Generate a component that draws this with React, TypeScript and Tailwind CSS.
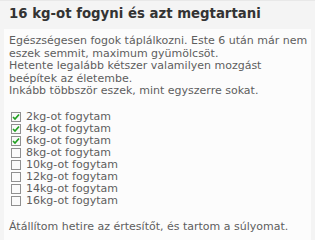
import React from "react";

const items = [
  { label: "2kg-ot fogytam", checked: true },
  { label: "4kg-ot fogytam", checked: true },
  { label: "6kg-ot fogytam", checked: true },
  { label: "8kg-ot fogytam", checked: false },
  { label: "10kg-ot fogytam", checked: false },
  { label: "12kg-ot fogytam", checked: false },
  { label: "14kg-ot fogytam", checked: false },
  { label: "16kg-ot fogytam", checked: false },
];

function Box({ checked }: { checked: boolean }) {
  return (
    <span className="w-[10px] h-[10px] border border-[#8f8f8f] bg-[#fafafa] flex items-center justify-center shrink-0">
      {checked && (
        <svg width="8" height="8" viewBox="0 0 8 8">
          <path d="M1 4 L3 6 L7 1.5" stroke="#22a022" strokeWidth="1.7" fill="none" />
        </svg>
      )}
    </span>
  );
}

export default function App() {
  return (
    <div
      className="w-[315px] h-[240px] bg-[#f4f4f4] border-t border-[#e8e8e8] overflow-hidden text-[11px] leading-[12.5px] text-[#5e5e5e]"
      style={{ fontFamily: '"DejaVu Sans", Verdana, sans-serif' }}
    >
      <div className="pl-[9px] pt-[5px] h-[28px] text-[13.3px] leading-[16px] font-bold text-[#333]">
        16 kg-ot fogyni és azt megtartani
      </div>
      <div className="ml-[4px] w-[307px] bg-[#fcfcfc] h-[212px] pl-[5px] pt-[6px]">
        <p>Egészségesen fogok táplálkozni. Este 6 után már nem eszek semmit, maximum gyümölcsöt.</p>
        <p>Hetente legalább kétszer valamilyen mozgást beépítek az életembe.</p>
        <p>Inkább többször eszek, mint egyszerre sokat.</p>
        <div className="mt-[13.5px] flex flex-col">
          {items.map((it) => (
            <div key={it.label} className="flex items-center gap-[5px] h-[12px] pl-[2px]">
              <Box checked={it.checked} />
              <span>{it.label}</span>
            </div>
          ))}
        </div>
        <p className="mt-[14px]">Átállítom hetire az értesítőt, és tartom a súlyomat.</p>
      </div>
    </div>
  );
}
